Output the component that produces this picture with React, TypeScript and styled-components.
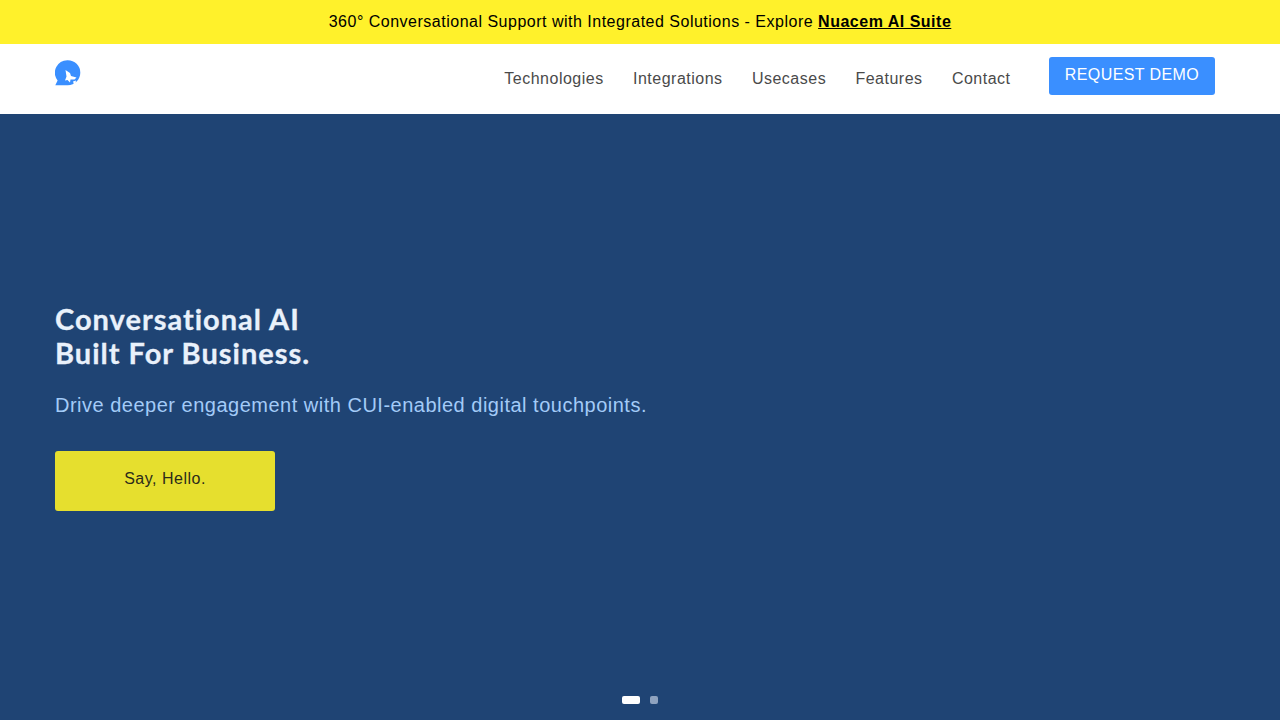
import styled, { createGlobalStyle } from "styled-components";

const GlobalStyle = createGlobalStyle`
  html, body {
    margin: 0;
    padding: 0;
  }
  body {
    font-family: "Liberation Sans", Arial, sans-serif;
    overflow: hidden;
  }
`;

const Page = styled.div`
  width: 1280px;
  height: 720px;
  display: flex;
  flex-direction: column;
  overflow: hidden;
`;

const Banner = styled.div`
  height: 44px;
  flex: none;
  background: #fff12b;
  color: #000;
  display: flex;
  align-items: center;
  justify-content: center;
  font-size: 16px;
  letter-spacing: 0.5px;
`;

const BannerLink = styled.a`
  font-weight: 700;
  color: #000;
  text-decoration: underline;
  margin-left: 5px;
`;

const Header = styled.header`
  height: 70px;
  flex: none;
  background: #fff;
  padding: 13px 65px 0 55px;
  box-sizing: border-box;
  display: flex;
  justify-content: space-between;
  align-items: flex-start;
`;

const Logo = styled.svg`
  width: 26px;
  height: 28px;
  display: block;
  margin-top: 3px;
`;

const Nav = styled.nav`
  display: flex;
  align-items: flex-start;
`;

const NavLink = styled.a`
  font-size: 16px;
  line-height: 18px;
  letter-spacing: 0.5px;
  color: #4a4a4a;
  margin-right: 29.3px;
  padding-top: 13px;
`;

const DemoButton = styled.button`
  width: 166px;
  height: 38px;
  margin-left: 9.2px;
  border: 0;
  border-radius: 3px;
  background: #3a8fff;
  color: #fff;
  font-family: inherit;
  font-size: 16px;
  letter-spacing: 0.4px;
  padding: 0 0 3px;
`;

const Hero = styled.section`
  flex: 1;
  position: relative;
  background: #1f4474;
  padding: 188px 55px 0;
`;

const Title = styled.h1`
  margin: 0;
  font-family: Lato, "Liberation Sans", sans-serif;
  font-weight: 700;
  font-size: 29px;
  line-height: 34px;
  letter-spacing: 1px;
  -webkit-text-stroke: 0.3px #e9f1fb;
  color: #e9f1fb;
`;

const Subtitle = styled.p`
  margin: 20px 0 0;
  font-size: 20px;
  line-height: 30px;
  letter-spacing: 0.5px;
  color: #a3cbf8;
`;

const HelloButton = styled.button`
  display: block;
  width: 220px;
  height: 60px;
  margin-top: 31px;
  border: 0;
  border-radius: 3px;
  background: #e6df2e;
  color: #2b2b1a;
  font-family: inherit;
  font-size: 16px;
  letter-spacing: 0.5px;
  padding: 0 0 5px;
`;

const Dots = styled.div`
  position: absolute;
  left: 622px;
  top: 582px;
  display: flex;
  gap: 10px;
`;

const Dot = styled.span<{ $active?: boolean }>`
  display: block;
  height: 8px;
  width: ${(p) => (p.$active ? "18px" : "8px")};
  border-radius: 2px;
  background: ${(p) => (p.$active ? "#fff" : "#8fa3bf")};
`;

const navItems = ["Technologies", "Integrations", "Usecases", "Features", "Contact"];

export default function App() {
  return (
    <Page>
      <GlobalStyle />
      <Banner>
        360° Conversational Support with Integrated Solutions - Explore
        <BannerLink>Nuacem AI Suite</BannerLink>
      </Banner>
      <Header>
        <Logo viewBox="0 0 26 28">
          <path
            d="M12.800 0.200a12.500 12.500 0 0 1 12.500 12.500c0 6.900-5.600 12.500-12.500 12.500H0.300l2.300-4.800A12.500 12.500 0 0 1 12.800 0.200z"
            fill="#3a8fff"
          />
          <path d="M10.500 10l4.500 3 1 3 5.500 1.500-2 2h-4l-.5 3-2.500-2.500-2.500.5 1.500-4z" fill="#fff" />
          <path d="M18 21.500l3-1-.5 3-1.500 1z" fill="#fff" />
        </Logo>
        <Nav>
          {navItems.map((item) => (
            <NavLink key={item}>{item}</NavLink>
          ))}
          <DemoButton>REQUEST DEMO</DemoButton>
        </Nav>
      </Header>
      <Hero>
        <Title>
          Conversational AI
          <br />
          Built For Business.
        </Title>
        <Subtitle>Drive deeper engagement with CUI-enabled digital touchpoints.</Subtitle>
        <HelloButton>Say, Hello.</HelloButton>
        <Dots>
          <Dot $active />
          <Dot />
        </Dots>
      </Hero>
    </Page>
  );
}
